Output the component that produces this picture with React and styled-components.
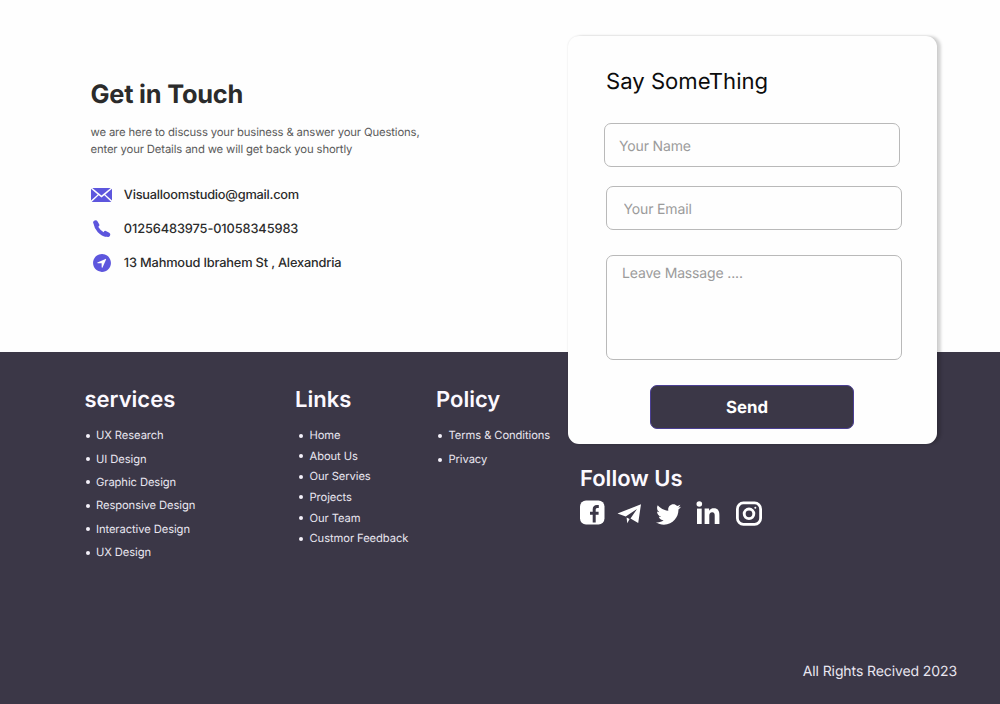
import React from 'react'
import styled, { createGlobalStyle } from 'styled-components'
import { FaTwitter } from 'react-icons/fa'
import { IoNavigateCircle } from 'react-icons/io5'

const GlobalStyle = createGlobalStyle`
  * {
    box-sizing: border-box;
  }
  body {
    margin: 0;
    font-family: Inter, 'Liberation Sans', sans-serif;
    text-rendering: geometricPrecision;
    background-color: #fff;
  }
  h1, h2, h3, p, ul {
    margin: 0;
    padding: 0;
  }
`

const Page = styled.div`
  position: relative;
  display: flex;
  flex-direction: column;
  width: 1000px;
  height: 704px;
  overflow: hidden;
`

const Contact = styled.section`
  height: 352px;
  padding: 79px 0 0 90.5px;
  background-color: #fefefe;
`

const Heading = styled.h1`
  font-size: 25.4px;
  line-height: 32px;
  font-weight: 700;
  letter-spacing: -0.22px;
  color: #2b2b2b;
`

const Intro = styled.p`
  margin-top: 13px;
  font-size: 11.3px;
  line-height: 17.4px;
  letter-spacing: -0.14px;
  color: #5a5a5a;
`

const ContactList = styled.ul`
  display: flex;
  flex-direction: column;
  margin-top: 19px;
  list-style: none;
`

const ContactItem = styled.li`
  display: grid;
  grid-template-columns: 33.3px auto;
  align-items: center;
  height: 34px;
  font-size: 12.8px;
  font-weight: 500;
  color: #2b2b2b;
  svg {
    display: block;
    color: #5d56dd;
  }
`

const ContactText = styled.span`
  padding-top: 2px;
  letter-spacing: ${(props) => props.$track}px;
`

const Card = styled.form`
  position: absolute;
  top: 36px;
  left: 568px;
  display: flex;
  flex-direction: column;
  width: 368.5px;
  height: 408px;
  padding: 30px 35px 0 36px;
  border-radius: 11px;
  background-color: #fefefe;
  box-shadow: 4px 0 3px rgba(0, 0, 0, 0.16), 0 0 2px rgba(0, 0, 0, 0.12);
`

const CardTitle = styled.h2`
  margin: 0 0 25px 2px;
  font-size: 22.1px;
  line-height: 32px;
  font-weight: 400;
  color: #0c0c0c;
`

const Input = styled.input`
  width: 296px;
  height: 44px;
  margin: 0 0 ${(props) => props.$gap}px ${(props) => props.$shift || 0}px;
  padding: 2px 0 0 ${(props) => props.$pad}px;
  border: 1px solid #b9b9b9;
  border-radius: 7px;
  background: transparent;
  font: 400 14px Inter, sans-serif;
  letter-spacing: -0.15px;
  text-rendering: inherit;
  &::placeholder {
    color: #9b9b9b;
  }
`

const Message = styled.textarea`
  width: 296px;
  height: 105px;
  margin: 0 0 25px 2px;
  padding: 9px 15px;
  border: 1px solid #b9b9b9;
  border-radius: 7px;
  background: transparent;
  resize: none;
  font: 400 14px/17px Inter, sans-serif;
  letter-spacing: -0.15px;
  text-rendering: inherit;
  &::placeholder {
    color: #9b9b9b;
  }
`

const Button = styled.button`
  width: 204px;
  height: 44px;
  margin-left: 46px;
  padding: 1px 10px 0 0;
  border: 1px solid #4b3f94;
  border-radius: 7px;
  background-color: #3b3747;
  color: #fff;
  font: 700 16.8px Inter, sans-serif;
  text-rendering: inherit;
`

const Footer = styled.footer`
  display: flex;
  flex-direction: column;
  justify-content: space-between;
  height: 352px;
  padding: 32px 43px 20px 84.5px;
  background-color: #3b3747;
  color: #fff;
`

const Columns = styled.div`
  display: grid;
  grid-template-columns: 210.5px 141px 144px auto;
`

const Title = styled.h3`
  font-size: 22px;
  line-height: 32px;
  font-weight: 600;
  color: #fcf9ff;
`

const List = styled.ul`
  margin: ${(props) => 19.2 - props.$step / 2}px 0 0 ${(props) => props.$indent || 0}px;
  list-style: none;
  li {
    display: flex;
    align-items: center;
    height: ${(props) => props.$step}px;
    font-size: 11.2px;
    letter-spacing: -0.08px;
    white-space: nowrap;
    color: #e9e6f0;
  }
  li::before {
    content: '';
    width: 4px;
    height: 4px;
    margin: 1px 6.5px 0 1px;
    border-radius: 50%;
    background-color: #f4f1fa;
  }
`

const Follow = styled.div`
  padding-top: 79px;
`

const Social = styled.div`
  display: flex;
  align-items: center;
  height: 28px;
  margin-top: 3.5px;
  color: #fff;
  svg {
    display: block;
    flex: none;
  }
`

const Slot = styled.span`
  width: ${(props) => props.$width}px;
  padding-top: ${(props) => props.$drop || 0}px;
`

const Rights = styled.p`
  align-self: flex-end;
  font-size: 14px;
  line-height: 24px;
  letter-spacing: -0.1px;
  color: #e9e6f0;
`

const MailIcon = () => (
  <svg width="21" height="14" viewBox="0 0 21 14" fill="currentColor">
    <path d="M1.3 0h18.4l-9.2 7.6z" />
    <path d="M0 .8 6.7 6.5 0 12.6zM21 .8l-6.7 5.7 6.7 6.1z" />
    <path d="M7.7 7.3 10.5 9.5l2.8-2.2 7 6.7H.7z" />
  </svg>
)

const PhoneIcon = () => (
  <svg width="21" height="18" viewBox="-2 0 21 18" fill="currentColor">
    <path
      d="M2.4 3.5C3 8.5 8 14.4 13.8 15.3"
      fill="none"
      stroke="currentColor"
      strokeWidth="3.6"
    />
    <rect x="1" y=".2" width="4.6" height="7.2" rx="2" transform="rotate(-30 3.2 3.9)" />
    <rect x="10.1" y="11.6" width="7.2" height="4.6" rx="2" transform="rotate(28 13.6 14)" />
  </svg>
)

const FacebookIcon = () => (
  <svg width="25" height="25" viewBox="0 0 25 25">
    <rect width="24.5" height="24" y=".5" rx="6" fill="currentColor" />
    <path
      d="M14.2 22.5V9.5Q14.2 6.5 17 6.5H18.8M10 13.2H18.6"
      fill="none"
      stroke="#3b3747"
      strokeWidth="3"
    />
  </svg>
)

const TelegramIcon = () => (
  <svg width="25" height="20" viewBox="0 0 25 20" fill="currentColor">
    <path d="M24 .2 21.2 19 13.5 14.4 20 5 8.7 12.5 .5 9.6z" />
    <path d="M9.6 13.6 12.6 15 10.3 19.2z" />
  </svg>
)

const LinkedinIcon = () => (
  <svg width="24" height="24" viewBox="0 0 24 24" fill="currentColor">
    <circle cx="3.3" cy="3" r="2.8" />
    <rect x="1" y="7.6" width="4.7" height="15.4" />
    <path d="M8.6 7.6h4.5v2.1c.9-1.6 2.5-2.5 4.7-2.5 4.3 0 5.6 2.8 5.6 6.8v9h-4.7v-8.2c0-2.1-.5-3.5-2.5-3.5s-2.9 1.4-2.9 3.5v8.2H8.6z" />
  </svg>
)

const InstagramIcon = () => (
  <svg width="26" height="25" viewBox="0 0 26 25" fill="none" stroke="currentColor">
    <rect x="1.4" y="1.9" width="23.2" height="21.4" rx="6" strokeWidth="2.8" />
    <circle cx="13" cy="12.8" r="4.8" strokeWidth="2.9" />
    <circle cx="19.3" cy="6.8" r="1" fill="currentColor" stroke="none" />
  </svg>
)

const services = ['UX Research', 'UI Design', 'Graphic Design', 'Responsive Design', 'Interactive Design', 'UX Design']
const links = ['Home', 'About Us', 'Our Servies', 'Projects', 'Our Team', 'Custmor Feedback']
const policy = ['Terms & Conditions', 'Privacy']

const Column = ({ title, items, ...props }) => (
  <div>
    <Title>{title}</Title>
    <List {...props}>
      {items.map((item) => <li key={item}>{item}</li>)}
    </List>
  </div>
)

const App = () => {
  return (
    <>
      <GlobalStyle />
      <Page>
        <Contact>
          <Heading>Get in Touch</Heading>
          <Intro>
            we are here to discuss your business &amp; answer your Questions,
            <br />
            enter your Details and we will get back you shortly
          </Intro>
          <ContactList>
            <ContactItem>
              <MailIcon />
              <ContactText $track={-0.23}>Visualloomstudio@gmail.com</ContactText>
            </ContactItem>
            <ContactItem>
              <PhoneIcon />
              <ContactText $track={-0.11}>01256483975-01058345983</ContactText>
            </ContactItem>
            <ContactItem>
              <IoNavigateCircle size={22} />
              <ContactText $track={-0.17}>13 Mahmoud Ibrahem St , Alexandria</ContactText>
            </ContactItem>
          </ContactList>
        </Contact>
        <Footer>
          <Columns>
            <Column title="services" items={services} $step={23.4} />
            <Column title="Links" items={links} $step={20.6} $indent={3} />
            <Column title="Policy" items={policy} $step={24} $indent={1} />
            <Follow>
              <Title>Follow Us</Title>
              <Social>
                <Slot $width={37}><FacebookIcon /></Slot>
                <Slot $width={39} $drop={3}><TelegramIcon /></Slot>
                <Slot $width={40} $drop={3}><FaTwitter size={25} /></Slot>
                <Slot $width={40}><LinkedinIcon /></Slot>
                <Slot $width={26} $drop={2}><InstagramIcon /></Slot>
              </Social>
            </Follow>
          </Columns>
          <Rights>All Rights Recived 2023</Rights>
        </Footer>
        <Card>
          <CardTitle>Say SomeThing</CardTitle>
          <Input type="text" placeholder="Your Name" $gap={19} $pad={14} />
          <Input type="email" placeholder="Your Email" $gap={25} $pad={16.5} $shift={2} />
          <Message placeholder="Leave Massage ...." />
          <Button type="button">Send</Button>
        </Card>
      </Page>
    </>
  )
}

export default App
